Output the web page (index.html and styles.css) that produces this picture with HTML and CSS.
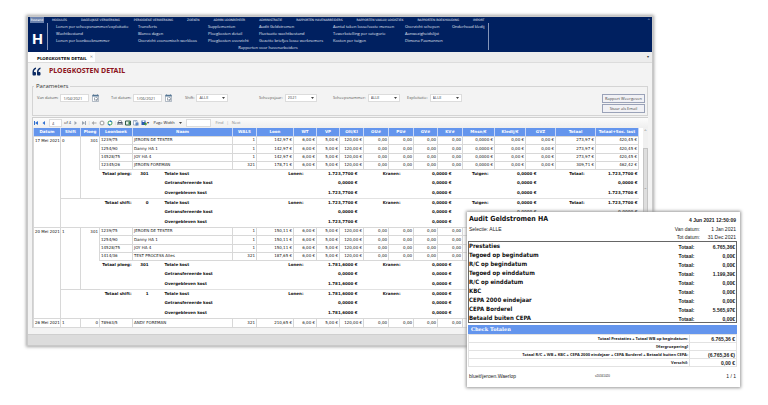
FILE: index.html
```html
<!doctype html>
<html lang="nl">
  <head>
    <meta charset="utf-8">
    <title>Ploegkosten detail</title>
    <link rel="stylesheet" href="styles.css">
  </head>

  <body>
    <main class="window">
      <!-- Ribbon -->
      <header class="ribbon">
        <nav class="menu">
          <a class="active" href="#">Bestand</a>
          <a href="#">MODULES</a>
          <a href="#">DAGELIJKSE VERWERKING</a>
          <a href="#">PERIODIEKE VERWERKING</a>
          <a href="#">ZOEKEN</a>
          <a href="#">ADMIN LOONBEHEER</a>
          <a href="#">ADMINISTRATIE</a>
          <a href="#">RAPPORTEN HAVENARBEIDERS</a>
          <a href="#">RAPPORTEN VAKLUI/ LOGISTIEK</a>
          <a href="#">RAPPORTEN BOEKHOUDING</a>
          <a href="#">IMPORT</a>
          <span class="collapse">^</span>
        </nav>
        <div class="ribbon-body">
          <div class="logo">H</div>
          <div class="group">
            <div class="links">
              <a href="#">Lonen per scheepsnummer/exploitatie</a>
              <a href="#">Transferts</a>
              <a href="#">Supplementen</a>
              <a href="#">Audit Geldstromen</a>
              <a href="#">Aantal taken losse/vaste mensen</a>
              <a href="#">Overzicht schepen</a>
              <a href="#">Onderhoud kledij</a>
              <a href="#">Wachtbestand</a>
              <a href="#">Blanco dagen</a>
              <a href="#">Ploegkosten detail</a>
              <a href="#">Fluctuatie wachtbestand</a>
              <a href="#">Tewerkstelling per categorie</a>
              <a href="#">Aanwezigheidslijst</a>
              <span></span>
              <a href="#">Lonen per loonboeknummer</a>
              <a href="#">Overzicht economisch werkloos</a>
              <a href="#">Ploegkosten overzicht</a>
              <a href="#">Gezette briefjes losse werknemers</a>
              <a href="#">Kosten per tuigen</a>
              <a href="#">Dimona Pasmannen</a>
            </div>
            <div class="caption">Rapporten voor havenarbeiders</div>
          </div>
        </div>
      </header>

      <!-- Tabs -->
      <div class="tabs">
        <div class="tab">PLOEGKOSTEN DETAIL <button type="button" class="close">✕</button></div>
        <span class="tab-menu">▾</span>
      </div>

      <div class="content">
        <h1>
          <svg class="quote" viewBox="0 0 18 18"><path fill="#0b2a63" d="M8 1C4 2 1 5 1 10v5c0 1 1 2 2 2h3c1 0 2-1 2-2v-3c0-1-1-2-2-2H4c0-3 1-5 4-6zM17 1c-4 1-7 4-7 9v5c0 1 1 2 2 2h3c1 0 2-1 2-2v-3c0-1-1-2-2-2h-2c0-3 1-5 4-6z"/></svg>
          PLOEGKOSTEN DETAIL
        </h1>

        <!-- Parameters -->
        <fieldset class="params">
          <legend>Parameters</legend>
          <div class="fields">
            <div class="field">
              <label for="from">Van datum:</label>
              <input id="from" type="text" value="1/04/2021">
              <svg class="cal" viewBox="0 0 14 16"><path fill="#fff" stroke="#6d7f92" d="M1 2h12v13H1z"/><path fill="#557795" d="M1 2h12v3H1zM3 0h1v3H3zM10 0h1v3h-1z"/><path fill="#43556a" d="M4 7h1v6H4zM7 7h4v1H7zM10 8h1v4h-1zM7 12h4v1H7zM7 10h3v1H7z"/></svg>
            </div>
            <div class="field">
              <label for="to">Tot datum:</label>
              <input id="to" type="text" value="1/06/2021">
              <svg class="cal" viewBox="0 0 14 16"><path fill="#fff" stroke="#6d7f92" d="M1 2h12v13H1z"/><path fill="#557795" d="M1 2h12v3H1zM3 0h1v3H3zM10 0h1v3h-1z"/><path fill="#43556a" d="M4 7h1v6H4zM7 7h4v1H7zM10 8h1v4h-1zM7 12h4v1H7zM7 10h3v1H7z"/></svg>
            </div>
            <div class="field">
              <label for="shift">Shift:</label>
              <select id="shift"><option>ALLE</option></select>
            </div>
            <div class="field">
              <label for="year">Scheepsjaar:</label>
              <select id="year"><option>2021</option></select>
            </div>
            <div class="field">
              <label for="ship">Scheepsnummer:</label>
              <select id="ship"><option>ALLE</option></select>
            </div>
            <div class="field">
              <label for="expl">Exploitatie:</label>
              <select id="expl"><option>ALLE</option></select>
            </div>
          </div>
          <div class="actions">
            <button type="button">Rapport Weergeven</button>
            <button type="button">Stuur als Email</button>
          </div>
        </fieldset>

        <!-- Report viewer -->
        <section class="viewer">
          <div class="toolbar">
            <svg class="icon" viewBox="0 0 12 12"><path fill="#2f6fd0" d="M2 2h2v8H2zM10 2v8L4 6z"/></svg>
            <svg class="icon" viewBox="0 0 12 12"><path fill="#2f6fd0" d="M8 2v8L3 6z"/></svg>
            <input class="page" type="text" value="4" aria-label="Pagina">
            <span>of 4</span>
            <svg class="icon" viewBox="0 0 12 12"><path fill="#9aa4b0" d="M3 2v8l5-4z"/></svg>
            <svg class="icon" viewBox="0 0 12 12"><path fill="#9aa4b0" d="M8 2h2v8H8zM2 2v8l6-4z"/></svg>
            <span class="sep">|</span>
            <svg class="icon" viewBox="0 0 12 12"><path fill="#a8a8a8" d="M1 6l5-4v3h5v2H6v3z"/></svg>
            <svg class="icon" viewBox="0 0 12 12"><circle cx="6" cy="6" r="5" fill="#b5b5b5"/><path stroke="#fff" stroke-width="2" d="M4 4l4 4M8 4l-4 4"/></svg>
            <svg class="icon" viewBox="0 0 12 12"><circle cx="6" cy="6" r="4" fill="#fff" stroke="#43a05a" stroke-width="2"/><path fill="#2f7fc4" d="M7 0l4 4H6zM5 12L1 8h5z"/></svg>
            <span class="sep">|</span>
            <svg class="icon" viewBox="0 0 12 12"><path fill="#4d5869" d="M3 1h6v3h2v6H1V4h2z"/><path fill="#fff" d="M4 2h4v2H4zM3 7h6v4H3z"/><path fill="#4d5869" d="M4 8h4v1H4z"/></svg>
            <svg class="icon" viewBox="0 0 12 12"><path fill="#e8f2e8" stroke="#2f5b46" stroke-width="2" d="M1 2h10v8H1z"/><path fill="#3d8050" d="M7 3h3v6H7z"/></svg>
            <svg class="icon" viewBox="0 0 12 12"><path fill="#fff" stroke="#4c6c9b" d="M1 1h7v9H1z"/><path fill="#5c86c0" d="M5 5h6v6H5zM3 3h3v1H3z"/></svg>
            <svg class="icon" viewBox="0 0 12 12"><path fill="#2b5ab0" d="M1 1h8v9H1z"/><path fill="#fff" d="M3 1h4v3H3z"/><path fill="#38903f" d="M6 6h3v-2l3 4-3 4v-3H6z"/></svg>
            <span class="caret">▾</span>
            <select class="zoom" aria-label="Zoom"><option>Page Width</option></select>
            <input class="find" type="text" aria-label="Zoeken">
            <a href="#">Find</a><span class="sep">|</span><a href="#">Next</a>
          </div>

          <div class="report">
            <table class="costs">
              <colgroup>
                <col class="w27"><col class="w20"><col class="w19"><col class="w33"><col class="w100">
                <col class="w24"><col class="w37"><col class="w23"><col class="w23"><col class="w24">
                <col class="w25"><col class="w25"><col class="w24"><col class="w25"><col class="w32">
                <col class="w31"><col class="w30"><col class="w40"><col class="w43">
              </colgroup>
              <thead>
                <tr>
                  <th>Datum</th><th>Shift</th><th>Ploeg</th><th>Loonboek</th><th>Naam</th><th>WALS</th><th>Loon</th><th>WT</th><th>VP</th><th>Olt/Kl</th><th>OU#</th><th>PU#</th><th>GV#</th><th>KV#</th><th>Mnsn/€</th><th>Kledij/€</th><th>GVZ</th><th>Totaal</th><th>Totaal+Soc. last</th>
                </tr>
              </thead>
              <tbody>
                <tr>
                  <td class="t" rowspan="10">17 Mei 2021</td><td class="t" rowspan="7">0</td><td class="n" rowspan="7">301</td>
                  <td class="t">1239/75</td><td class="t">JEROEN DE TESTER</td><td>1</td><td>142,97 €</td><td>6,00 €</td><td>5,00 €</td><td>120,00 €</td><td>0,00</td><td>0,00</td><td>0,00</td><td>0,00</td><td>0,0000 €</td><td>0,00 €</td><td>0,00 €</td><td>273,97 €</td><td>420,45 €</td>
                </tr>
                <tr class="tall">
                  <td class="t">1254/90</td><td class="t">Danny HA 1</td><td>1</td><td>142,97 €</td><td>6,00 €</td><td>5,00 €</td><td>120,00 €</td><td>0,00</td><td>0,00</td><td>0,00</td><td>0,00</td><td>0,0000 €</td><td>0,00 €</td><td>0,00 €</td><td>273,97 €</td><td>420,45 €</td>
                </tr>
                <tr>
                  <td class="t">14528/75</td><td class="t">JOY HA 4</td><td>1</td><td>142,97 €</td><td>6,00 €</td><td>5,00 €</td><td>120,00 €</td><td>0,00</td><td>0,00</td><td>0,00</td><td>0,00</td><td>0,0000 €</td><td>0,00 €</td><td>0,00 €</td><td>273,97 €</td><td>420,45 €</td>
                </tr>
                <tr>
                  <td class="t">12345/26</td><td class="t">JEROEN FOREMAN</td><td>321</td><td>178,71 €</td><td>6,00 €</td><td>5,00 €</td><td>120,00 €</td><td>0,00</td><td>0,00</td><td>0,00</td><td>0,00</td><td>0,0000 €</td><td>0,00 €</td><td>0,00 €</td><td>309,71 €</td><td>462,42 €</td>
                </tr>
                <tr class="sum first">
                  <td>Totaal ploeg:</td><td class="kind"><b>301</b>Totale kost</td><td class="lab" colspan="3">Lonen:</td><td class="v1" colspan="2">1.723,7700 €</td><td class="lab" colspan="2">Kranen:</td><td class="v2" colspan="2">0,0000 €</td><td class="v1">Tuigen:</td><td class="v3" colspan="2">0,0000 €</td><td class="v2">Totaal:</td><td>1.723,7700 €</td>
                </tr>
                <tr class="sum">
                  <td></td><td class="kind"><b></b>Getransfereerde kost</td><td colspan="3"></td><td class="v1" colspan="2">0,0000 €</td><td colspan="2"></td><td class="v2" colspan="2">0,0000 €</td><td></td><td class="v3" colspan="2">0,0000 €</td><td></td><td>0,0000 €</td>
                </tr>
                <tr class="sum">
                  <td></td><td class="kind"><b></b>Overgebleven kost</td><td colspan="3"></td><td class="v1" colspan="2">1.723,7700 €</td><td colspan="2"></td><td class="v2" colspan="2">0,0000 €</td><td></td><td class="v3" colspan="2">0,0000 €</td><td></td><td>1.723,7700 €</td>
                </tr>
                <tr class="sum first">
                  <td colspan="3">Totaal shift:</td><td class="kind"><b>0</b>Totale kost</td><td class="lab" colspan="3">Lonen:</td><td class="v1" colspan="2">1.723,7700 €</td><td class="lab" colspan="2">Kranen:</td><td class="v2" colspan="2">0,0000 €</td><td class="v1">Tuigen:</td><td class="v3" colspan="2">0,0000 €</td><td class="v2">Totaal:</td><td>1.723,7700 €</td>
                </tr>
                <tr class="sum">
                  <td colspan="3"></td><td class="kind"><b></b>Getransfereerde kost</td><td colspan="3"></td><td class="v1" colspan="2">0,0000 €</td><td colspan="2"></td><td class="v2" colspan="2">0,0000 €</td><td></td><td class="v3" colspan="2">0,0000 €</td><td></td><td>0,0000 €</td>
                </tr>
                <tr class="sum">
                  <td colspan="3"></td><td class="kind"><b></b>Overgebleven kost</td><td colspan="3"></td><td class="v1" colspan="2">1.723,7700 €</td><td colspan="2"></td><td class="v2" colspan="2">0,0000 €</td><td colspan="5"></td>
                </tr>
              </tbody>
              <tbody>
                <tr>
                  <td class="t" rowspan="10">20 Mei 2021</td><td class="t" rowspan="7">1</td><td class="n" rowspan="7">301</td>
                  <td class="t">1239/75</td><td class="t">JEROEN DE TESTER</td><td>1</td><td>150,11 €</td><td>6,00 €</td><td>5,00 €</td><td>120,00 €</td><td>0,00</td><td>0,00</td><td>0,00</td><td>0,00</td><td></td><td></td><td></td><td></td><td></td>
                </tr>
                <tr class="tall">
                  <td class="t">1254/90</td><td class="t">Danny HA 1</td><td>1</td><td>150,11 €</td><td>6,00 €</td><td>5,00 €</td><td>120,00 €</td><td>0,00</td><td>0,00</td><td>0,00</td><td>0,00</td><td></td><td></td><td></td><td></td><td></td>
                </tr>
                <tr>
                  <td class="t">14528/75</td><td class="t">JOY HA 4</td><td>1</td><td>150,11 €</td><td>6,00 €</td><td>5,00 €</td><td>120,00 €</td><td>0,00</td><td>0,00</td><td>0,00</td><td>0,00</td><td></td><td></td><td></td><td></td><td></td>
                </tr>
                <tr>
                  <td class="t">1414/36</td><td class="t">TEST PROCESS Alles</td><td>321</td><td>187,65 €</td><td>6,00 €</td><td>5,00 €</td><td>120,00 €</td><td>0,00</td><td>0,00</td><td>0,00</td><td>0,00</td><td></td><td></td><td></td><td></td><td></td>
                </tr>
                <tr class="sum first">
                  <td>Totaal ploeg:</td><td class="kind"><b>301</b>Totale kost</td><td class="lab" colspan="3">Lonen:</td><td class="v1" colspan="2">1.781,6000 €</td><td class="lab" colspan="2">Kranen:</td><td class="v2" colspan="2">0,0000 €</td><td colspan="5"></td>
                </tr>
                <tr class="sum">
                  <td></td><td class="kind"><b></b>Getransfereerde kost</td><td colspan="3"></td><td class="v1" colspan="2">0,0000 €</td><td colspan="2"></td><td class="v2" colspan="2">0,0000 €</td><td colspan="5"></td>
                </tr>
                <tr class="sum">
                  <td></td><td class="kind"><b></b>Overgebleven kost</td><td colspan="3"></td><td class="v1" colspan="2">1.781,6000 €</td><td colspan="2"></td><td class="v2" colspan="2">0,0000 €</td><td colspan="5"></td>
                </tr>
                <tr class="sum first">
                  <td colspan="3">Totaal shift:</td><td class="kind"><b>1</b>Totale kost</td><td class="lab" colspan="3">Lonen:</td><td class="v1" colspan="2">1.781,6000 €</td><td class="lab" colspan="2">Kranen:</td><td class="v2" colspan="2">0,0000 €</td><td colspan="5"></td>
                </tr>
                <tr class="sum">
                  <td colspan="3"></td><td class="kind"><b></b>Getransfereerde kost</td><td colspan="3"></td><td class="v1" colspan="2">0,0000 €</td><td colspan="2"></td><td class="v2" colspan="2">0,0000 €</td><td colspan="5"></td>
                </tr>
                <tr class="sum">
                  <td colspan="3"></td><td class="kind"><b></b>Overgebleven kost</td><td colspan="3"></td><td class="v1" colspan="2">1.781,6000 €</td><td colspan="2"></td><td class="v2" colspan="2">0,0000 €</td><td colspan="5"></td>
                </tr>
              </tbody>
              <tbody>
                <tr class="tall">
                  <td class="t">26 Mei 2021</td><td class="t">1</td><td>0</td><td class="t">78963/5</td><td class="t">ANDY FOREMAN</td><td>321</td><td>210,65 €</td><td>6,00 €</td><td>5,00 €</td><td>120,00 €</td><td>0,00</td><td>0,00</td><td>0,00</td><td>0,00</td><td></td><td></td><td></td><td></td><td></td>
                </tr>
              </tbody>
            </table>
            <div class="scroll"><span class="up">^</span><span class="thumb">=</span></div>
          </div>
        </section>
      </div>
      <footer class="status"></footer>
    </main>

    <!-- Audit window -->
    <section class="audit">
      <div class="audit-head">
        <h2>Audit Geldstromen HA</h2>
        <b>4 Jun 2021 12:50:09</b>
      </div>
      <div class="audit-sub">
        <span>Selectie: ALLE</span>
        <dl>
          <dt>Van datum:</dt><dd>1 Jan 2021</dd>
          <dt>Tot datum:</dt><dd>31 Dec 2021</dd>
        </dl>
      </div>
      <table class="amounts">
        <tr><th>Prestaties</th><td>Totaal:</td><td>6.765,36€</td></tr>
        <tr><th>Tegoed op begindatum</th><td>Totaal:</td><td>0,00€</td></tr>
        <tr><th>R/C op begindatum</th><td>Totaal:</td><td>0,00€</td></tr>
        <tr><th>Tegoed op einddatum</th><td>Totaal:</td><td>1.199,39€</td></tr>
        <tr><th>R/C op einddatum</th><td>Totaal:</td><td>0,00€</td></tr>
        <tr><th>KBC</th><td>Totaal:</td><td>0,00€</td></tr>
        <tr><th>CEPA 2000 eindejaar</th><td>Totaal:</td><td>0,00€</td></tr>
        <tr><th>CEPA Borderel</th><td>Totaal:</td><td>5.565,97€</td></tr>
        <tr><th>Betaald buiten CEPA</th><td>Totaal:</td><td>0,00€</td></tr>
      </table>
      <h3>Check Totalen</h3>
      <table class="check">
        <tr><td>Totaal Prestaties + Totaal WB op begindatum:</td><td>6.765,36 €</td></tr>
        <tr><td>[Hergroepering]</td><td></td></tr>
        <tr><td>Totaal R/C + WB + KBC + CEPA 2000 eindejaar + CEPA Borderel + Betaald buiten CEPA:</td><td>(6.765,36 €)</td></tr>
        <tr><td>Verschil:</td><td>0,00 €</td></tr>
      </table>
      <div class="audit-foot">
        <span>blueit\jeroen.Waerlop</span>
        <small>v20161020</small>
        <span>1 / 1</span>
      </div>
    </section>
  </body>
</html>
```
FILE: styles.css
```css
* {
  box-sizing: border-box;
}

body {
  margin: 0;
  padding: 16px 115px 20px 27px;
  background: #fff;
  color: #333;
  font-family: "Open Sans", sans-serif;
  font-size: 4px;
  line-height: 6px;
}

a {
  color: inherit;
  text-decoration: none;
}

input, select, button {
  appearance: none;
  margin: 0;
  padding: 0 2px;
  border: 1px solid #dcdcdc;
  border-radius: 0;
  background: #fff;
  color: #444;
  font: inherit;
}

select {
  background: #fff url("data:image/svg+xml,%3Csvg xmlns='http://www.w3.org/2000/svg' viewBox='0 0 6 4'%3E%3Cpath fill='%23444' d='M0 0h6L3 4z'/%3E%3C/svg%3E") no-repeat right 2px center / 3px 2px;
}

.window {
  border: 1px solid #c9c9c9;
  background: #f3f3f3;
  box-shadow: 0 0 3px 1px #a5a5a5;
}

/* Ribbon */
.ribbon {
  height: 35px;
  background: #002060;
  color: #e2e8f4;
}

.menu {
  display: flex;
  gap: 14px;
  height: 6px;
  padding-left: 2px;
  font-family: "DejaVu Sans", sans-serif;
  font-size: 3px;
  white-space: nowrap;
}

.menu .active {
  width: 14px;
  margin-right: -6px;
  background: #6d83ae;
  color: #fff;
  text-align: center;
}

.collapse {
  margin-left: auto;
  padding-right: 2px;
}

.ribbon-body {
  display: flex;
}

.logo {
  width: 19px;
  color: #fff;
  font-family: "Noto Sans", sans-serif;
  font-size: 15px;
  font-weight: bold;
  line-height: 30px;
  text-align: center;
}

.group {
  width: 442px;
  height: 27px;
  border: solid #8494b8;
  border-width: 0 1px;
  line-height: 7px;
  white-space: nowrap;
}

.links {
  display: grid;
  grid-template-columns: 82px 70px 51px 74px 72px 47px 1fr;
  padding: 0 0 0 8px;
}

.caption {
  text-align: center;
}

/* Tabs */
.tabs {
  display: flex;
  align-items: flex-end;
  justify-content: space-between;
  height: 11px;
  border-bottom: 1px solid #dcdcdc;
  background: #ececec;
}

.tab {
  display: flex;
  gap: 3px;
  height: 10px;
  padding: 0 2px 0 9px;
  background: #fff;
  color: #111;
  font-family: "DejaVu Sans", sans-serif;
  font-weight: bold;
  line-height: 14px;
}

.close {
  padding: 0;
  border: 0;
  color: #888;
  line-height: 10px;
}

.tab-menu {
  padding-right: 3px;
  line-height: 10px;
}

.content {
  padding: 3px 4px 6px;
}

h1 {
  display: flex;
  align-items: center;
  gap: 8px;
  margin: 0;
  color: #8c1420;
  font-family: "Noto Sans", sans-serif;
  font-size: 7px;
  line-height: 10px;
}

.quote {
  width: 9px;
  height: 9px;
}

/* Parameters */
.params {
  display: flex;
  justify-content: space-between;
  height: 34px;
  margin: 6px 0 0;
  padding: 4px 2px 0 4px;
  border: 1px solid #d4d4d4;
}

.params legend {
  padding: 0 2px;
  margin-left: -3px;
  font-size: 6px;
  line-height: 8px;
}

.fields {
  display: grid;
  grid-template-columns: repeat(6, 74px);
  height: 8px;
}

.field {
  display: flex;
  align-items: center;
  gap: 2px;
  color: #555;
}

.field input {
  width: 29px;
  height: 8px;
}

.field select {
  width: 32px;
  height: 8px;
}

.cal {
  width: 7px;
  height: 8px;
  margin-left: 1px;
}

.actions {
  display: flex;
  flex-direction: column;
  gap: 1px;
}

.actions button {
  width: 43px;
  height: 9px;
  padding: 0;
  border-color: #9aa2b8;
  background: #f1f1f5;
}

/* Report viewer */
.viewer {
  margin-top: 1px;
  border-top: 1px solid #cfcfcf;
  border-left: 1px solid #cfcfcf;
}

.toolbar {
  display: flex;
  align-items: center;
  gap: 2px;
  height: 10px;
  background: linear-gradient(#fcfcfc, #eee);
}

.icon {
  width: 6px;
  height: 6px;
}

.sep {
  margin: 0 -1px;
  color: #aaa;
}

.caret {
  margin-left: -2px;
}

.toolbar .page {
  width: 13px;
  height: 8px;
}

.toolbar .zoom {
  width: 33px;
  height: 8px;
  border: 0;
  background-color: transparent;
  color: #222;
}

.toolbar .find {
  width: 25px;
  height: 8px;
}

.toolbar a {
  margin: 0 2px;
  color: #888;
}

.report {
  display: flex;
  gap: 4px;
  background: #fff;
}

.costs {
  flex: 1;
  width: 100%;
  table-layout: fixed;
  border-collapse: collapse;
  color: #111;
  font-family: "DejaVu Sans", sans-serif;
  line-height: 6px;
  white-space: nowrap;
}

.costs tr {
  height: 8px;
}

.costs .tall {
  height: 9px;
}

.costs th {
  padding: 0;
  border: solid #c6d6f8;
  border-width: 0 1px;
  background: #6495ed;
  color: #fff;
}

.costs td {
  padding: 0 1px;
  border: 1px solid #d8d8d8;
  text-align: right;
}

.costs .t {
  text-align: left;
}

.costs td[rowspan] {
  padding-top: 1px;
  vertical-align: top;
}

.costs .n {
  border-right: 0;
}

.costs .sum {
  height: 10px;
  font-weight: bold;
}

.costs .sum.first {
  height: 9px;
}

.costs .sum td {
  border: 0;
}

.costs .first td {
  border-top: 1px solid #e2e2e2;
}

.costs .kind {
  text-align: left;
}

.kind b {
  display: inline-block;
  width: 15px;
  margin-right: 16px;
  text-align: right;
}

.costs .lab {
  padding-right: 13px;
}

.costs .v1 {
  padding-right: 6px;
}

.costs .v2 {
  padding-right: 11px;
}

.costs .v3 {
  padding-right: 19px;
}

.w19 { width: 19px; }
.w20 { width: 20px; }
.w23 { width: 23px; }
.w24 { width: 24px; }
.w25 { width: 25px; }
.w27 { width: 27px; }
.w30 { width: 30px; }
.w31 { width: 31px; }
.w32 { width: 32px; }
.w33 { width: 33px; }
.w37 { width: 37px; }
.w40 { width: 40px; }
.w43 { width: 43px; }
.w100 { width: 100px; }

.scroll {
  display: flex;
  flex-direction: column;
  width: 6px;
  background: #f0f0f0;
  text-align: center;
}

.scroll .up {
  height: 20px;
}

.scroll .thumb {
  display: flex;
  align-items: center;
  justify-content: center;
  height: 80px;
  border: 1px solid #c4c4c4;
  background: #dedede;
}

.status {
  height: 11px;
  border-top: 1px solid #cfcfcf;
  background: #dcdcdc;
}

/* Audit window, floats over the report */
.audit {
  position: absolute;
  top: 212px;
  right: 28px;
  width: 273px;
  padding: 3px 3px 8px 1px;
  background: #fff;
  box-shadow: 0 0 3px 1px #999;
  color: #222;
  font-family: "Liberation Sans", sans-serif;
  font-size: 5px;
}

.audit-head, .audit-sub {
  display: flex;
  justify-content: space-between;
  padding: 0 1px;
}

.audit h2 {
  margin: 0;
  color: #111;
  font-family: "DejaVu Sans Condensed", "DejaVu Sans", sans-serif;
  font-size: 7px;
  line-height: 8px;
}

.audit-head b {
  line-height: 10px;
}

.audit-sub {
  line-height: 8px;
}

.audit dl {
  display: grid;
  grid-template-columns: auto 36px;
  margin: 0;
  text-align: right;
}

.audit dd {
  margin: 0;
}

.amounts, .check {
  width: 100%;
  border-collapse: collapse;
  font-weight: bold;
}

.amounts {
  border: 1px solid #666;
}

.amounts tr {
  height: 9px;
}

.amounts th {
  padding: 0;
  color: #111;
  font-family: "DejaVu Sans Condensed", "DejaVu Sans", sans-serif;
  font-size: 6px;
  text-align: left;
}

.amounts td {
  width: 41px;
  padding: 2px 1px 0 0;
  text-align: right;
}

.audit h3 {
  margin: 2px 0 0;
  padding-left: 3px;
  background: #6495ed;
  color: #fff;
  font-family: "DejaVu Serif", serif;
  font-size: 5px;
  line-height: 9px;
}

.check td {
  height: 8px;
  padding: 0 1px;
  border: 1px solid #e2e2e2;
  font-family: "Noto Sans", sans-serif;
  font-size: 4px;
  text-align: right;
}

.check td:last-child {
  width: 47px;
  font-family: "Liberation Sans", sans-serif;
  font-size: 5px;
}

.audit-foot {
  display: grid;
  grid-template-columns: 1fr auto 1fr;
  padding: 6px 1px 0;
}

.audit-foot small {
  font-size: 3px;
}

.audit-foot span:last-child {
  text-align: right;
}
```
